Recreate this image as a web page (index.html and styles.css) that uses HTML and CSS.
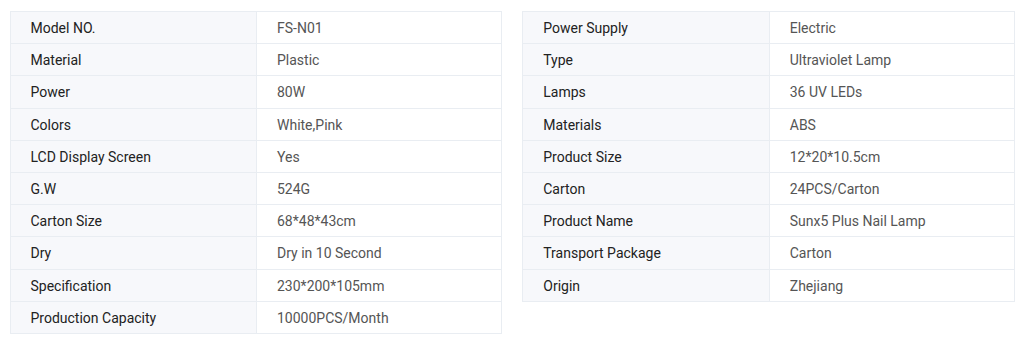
FILE: index.html
```html
<!DOCTYPE html>
<html>
<head>
<meta charset="utf-8">
<link rel="stylesheet" href="styles.css">
</head>
<body>
<div class="wrap">
  <table class="spec">
    <tr><td class="k">Model NO.</td><td class="v">FS-N01</td></tr>
    <tr><td class="k">Material</td><td class="v">Plastic</td></tr>
    <tr><td class="k">Power</td><td class="v">80W</td></tr>
    <tr><td class="k">Colors</td><td class="v">White,Pink</td></tr>
    <tr><td class="k">LCD Display Screen</td><td class="v">Yes</td></tr>
    <tr><td class="k">G.W</td><td class="v">524G</td></tr>
    <tr><td class="k">Carton Size</td><td class="v">68*48*43cm</td></tr>
    <tr><td class="k">Dry</td><td class="v">Dry in 10 Second</td></tr>
    <tr><td class="k">Specification</td><td class="v">230*200*105mm</td></tr>
    <tr><td class="k">Production Capacity</td><td class="v">10000PCS/Month</td></tr>
  </table>
  <table class="spec">
    <tr><td class="k">Power Supply</td><td class="v">Electric</td></tr>
    <tr><td class="k">Type</td><td class="v">Ultraviolet Lamp</td></tr>
    <tr><td class="k">Lamps</td><td class="v">36 UV LEDs</td></tr>
    <tr><td class="k">Materials</td><td class="v">ABS</td></tr>
    <tr><td class="k">Product Size</td><td class="v">12*20*10.5cm</td></tr>
    <tr><td class="k">Carton</td><td class="v">24PCS/Carton</td></tr>
    <tr><td class="k">Product Name</td><td class="v">Sunx5 Plus Nail Lamp</td></tr>
    <tr><td class="k">Transport Package</td><td class="v">Carton</td></tr>
    <tr><td class="k">Origin</td><td class="v">Zhejiang</td></tr>
  </table>
</div>
</body>
</html>
```
FILE: styles.css
```css
html, body {
  margin: 0;
  padding: 0;
  background: #fff;
}
body {
  font-family: Roboto, "Liberation Sans", Arial, sans-serif;
  font-size: 14px;
}
.wrap {
  display: flex;
  align-items: flex-start;
  gap: 20px;
  padding: 11px 9px 0 9.5px;
}
.spec {
  width: 493px;
  border-collapse: collapse;
  table-layout: fixed;
}
.spec td {
  height: 32.2px;
  padding: 1px 0 0 20px;
  border: 1px solid #e9edf2;
  box-sizing: border-box;
  vertical-align: middle;
  line-height: 16px;
}
.spec .k {
  width: 246.5px;
  background: #f7f8fb;
  color: #222;
}
.spec .v {
  background: #fff;
  color: #555;
}
```
